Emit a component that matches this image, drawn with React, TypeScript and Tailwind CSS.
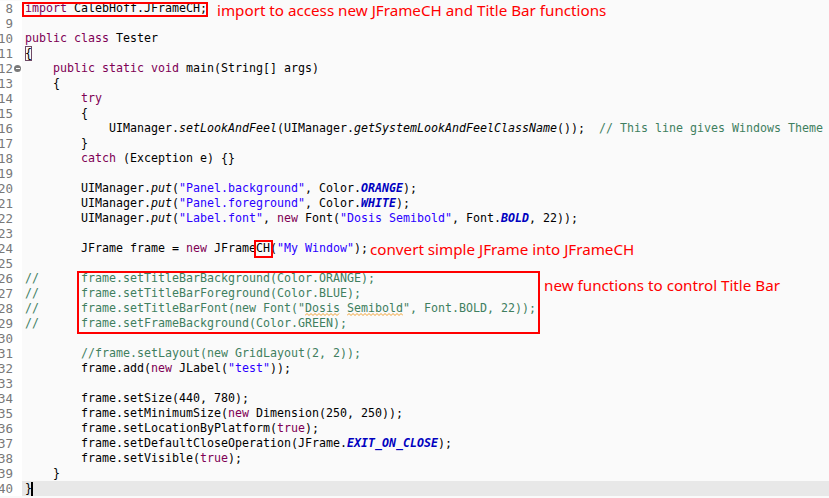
import React from "react";

type Tok = [string, string?];

const KW = "text-[#7f0055]";
const ST = "text-[#2a00ff]";
const CM = "text-[#3f7f5f]";
const IT = "italic";
const CN = "italic font-bold text-[#0000c0]";

const lines: Record<number, Tok[]> = {
  10: [["public", KW], [" "], ["class", KW], [" Tester"]],
  12: [["    "], ["public", KW], [" "], ["static", KW], [" "], ["void", KW], [" main(String[] args)"]],
  13: [["    {"]],
  14: [["        "], ["try", KW]],
  15: [["        {"]],
  16: [
    ["            UIManager."],
    ["setLookAndFeel", IT],
    ["(UIManager."],
    ["getSystemLookAndFeelClassName", IT],
    ["());  "],
    ["// This line gives Windows Theme", CM],
  ],
  17: [["        }"]],
  18: [["        "], ["catch", KW], [" (Exception e) {}"]],
  20: [["        UIManager."], ["put", IT], ["("], ['"Panel.background"', ST], [", Color."], ["ORANGE", CN], [");"]],
  21: [["        UIManager."], ["put", IT], ["("], ['"Panel.foreground"', ST], [", Color."], ["WHITE", CN], [");"]],
  22: [
    ["        UIManager."],
    ["put", IT],
    ["("],
    ['"Label.font"', ST],
    [", "],
    ["new", KW],
    [" Font("],
    ['"Dosis Semibold"', ST],
    [", Font."],
    ["BOLD", CN],
    [", 22));"],
  ],
  31: [["        "], ["//frame.setLayout(new GridLayout(2, 2));", CM]],
  32: [["        frame.add("], ["new", KW], [" JLabel("], ['"test"', ST], ["));"]],
  34: [["        frame.setSize(440, 780);"]],
  35: [["        frame.setMinimumSize("], ["new", KW], [" Dimension(250, 250));"]],
  36: [["        frame.setLocationByPlatform("], ["true", KW], [");"]],
  37: [["        frame.setDefaultCloseOperation(JFrame."], ["EXIT_ON_CLOSE", CN], [");"]],
  38: [["        frame.setVisible("], ["true", KW], [");"]],
  39: [["    }"]],
};

const mono = "font-['DejaVu_Sans_Mono',monospace] text-[11.63px] leading-[15px] whitespace-pre";
const anno = "font-['Noto_Sans',sans-serif] text-[15.2px] text-[#ff0000] whitespace-pre leading-[15px]";

function Gutter({ n, marker }: { n: number; marker?: boolean }) {
  return (
    <div className="relative w-[22px] shrink-0 bg-white overflow-hidden h-[15px]">
      <span className={`absolute right-[9px] top-0 ${mono} text-[#787878] text-[12.5px]`}>{n}</span>
      {marker && (
        <span className="absolute left-[14px] top-[4px] w-[7px] h-[7px] rounded-full bg-[#7a7a7a] flex items-center justify-center">
          <span className="block w-[4px] h-[1px] bg-white" />
        </span>
      )}
    </div>
  );
}

function Line({
  n,
  children,
  marker,
  highlight,
}: {
  n: number;
  children?: React.ReactNode;
  marker?: boolean;
  highlight?: boolean;
}) {
  return (
    <div className="flex h-[15px]">
      <Gutter n={n} marker={marker} />
      <div className={`flex-1 pl-[3px] h-[15px] ${highlight ? "bg-[#e8e8e8]" : ""}`}>
        <div className={`${mono} text-black flex items-center h-[15px]`}>{children}</div>
      </div>
    </div>
  );
}

function Toks({ toks }: { toks: Tok[] }) {
  return (
    <>
      {toks.map((t, i) => (
        <span key={i} className={t[1] ?? ""}>
          {t[0]}
        </span>
      ))}
    </>
  );
}

function Squiggle({ children, w }: { children: React.ReactNode; w: number }) {
  const pts: string[] = [];
  for (let x = 0; x <= w; x += 2) {
    pts.push(`${x},${(x / 2) % 2 === 0 ? 2.5 : 0.5}`);
  }
  return (
    <span className="relative">
      {children}
      <svg className="absolute left-0 bottom-[-1px]" width={w} height={3}>
        <polyline points={pts.join(" ")} fill="none" stroke="#f0a030" strokeWidth={1} />
      </svg>
    </span>
  );
}

export default function App() {
  const rows: React.ReactNode[] = [];
  for (let n = 8; n <= 40; n++) {
    if (n === 8) {
      rows.push(
        <Line key={n} n={n}>
          <span className="relative">
            <span className={KW}>import</span> CalebHoff.JFrameCH;
            <span className="absolute left-[-3px] right-[-1px] top-[1px] bottom-[-1px] border-2 border-[#ff0000]" />
          </span>
          <span className={`${anno} ml-[10px] relative top-[2px]`}>import to access new JFrameCH and Title Bar functions</span>
        </Line>
      );
    } else if (n === 11) {
      rows.push(
        <Line key={n} n={n}>
          <span className="outline outline-1 outline-[#6e4a66] -outline-offset-1">{"{"}</span>
        </Line>
      );
    } else if (n === 12) {
      rows.push(
        <Line key={n} n={n} marker>
          <Toks toks={lines[12]} />
        </Line>
      );
    } else if (n === 24) {
      rows.push(
        <Line key={n} n={n}>
          <span>{"        JFrame frame = "}</span>
          <span className={KW}>new</span>
          <span>{" JFrame"}</span>
          <span className="relative">
            CH
            <span className="absolute left-[-2px] right-[-3px] top-[-1px] bottom-[-2px] border-2 border-[#ff0000]" />
          </span>
          <span>(</span>
          <span className={ST}>"My Window"</span>
          <span>);</span>
          <span className={`${anno} ml-[2px] relative top-[1px]`}>convert simple JFrame into JFrameCH</span>
        </Line>
      );
    } else if (n === 26) {
      rows.push(
        <div key="box" className="relative">
          <Line n={26}>
            <span className={CM}>{"//      frame.setTitleBarBackground(Color.ORANGE);"}</span>
          </Line>
          <Line n={27}>
            <span className={CM}>{"//      frame.setTitleBarForeground(Color.BLUE);"}</span>
          </Line>
          <Line n={28}>
            <span className={CM}>
              {'//      frame.setTitleBarFont(new Font("'}
              <Squiggle w={35}>Dosis</Squiggle> <Squiggle w={56}>Semibold</Squiggle>
              {'", Font.BOLD, 22));'}
            </span>
          </Line>
          <Line n={29}>
            <span className={CM}>{"//      frame.setFrameBackground(Color.GREEN);"}</span>
          </Line>
          <div className="absolute left-[77px] w-[463px] top-0 h-[63px] border-2 border-[#ff0000]" />
          <div className={`absolute left-[544px] top-[7px] ${anno}`}>new functions to control Title Bar</div>
        </div>
      );
      n = 29;
    } else if (n === 40) {
      rows.push(
        <Line key={n} n={n} highlight>
          <span>{"}"}</span>
          <span className="inline-block w-[2px] h-[14px] bg-black ml-[-1px]" />
        </Line>
      );
    } else {
      rows.push(
        <Line key={n} n={n}>
          {lines[n] ? <Toks toks={lines[n]} /> : null}
        </Line>
      );
    }
  }
  return (
    <div className="w-[829px] h-[498px] overflow-hidden bg-[#fafafa] relative">
      <div className="pt-[1px]">{rows}</div>
    </div>
  );
}
